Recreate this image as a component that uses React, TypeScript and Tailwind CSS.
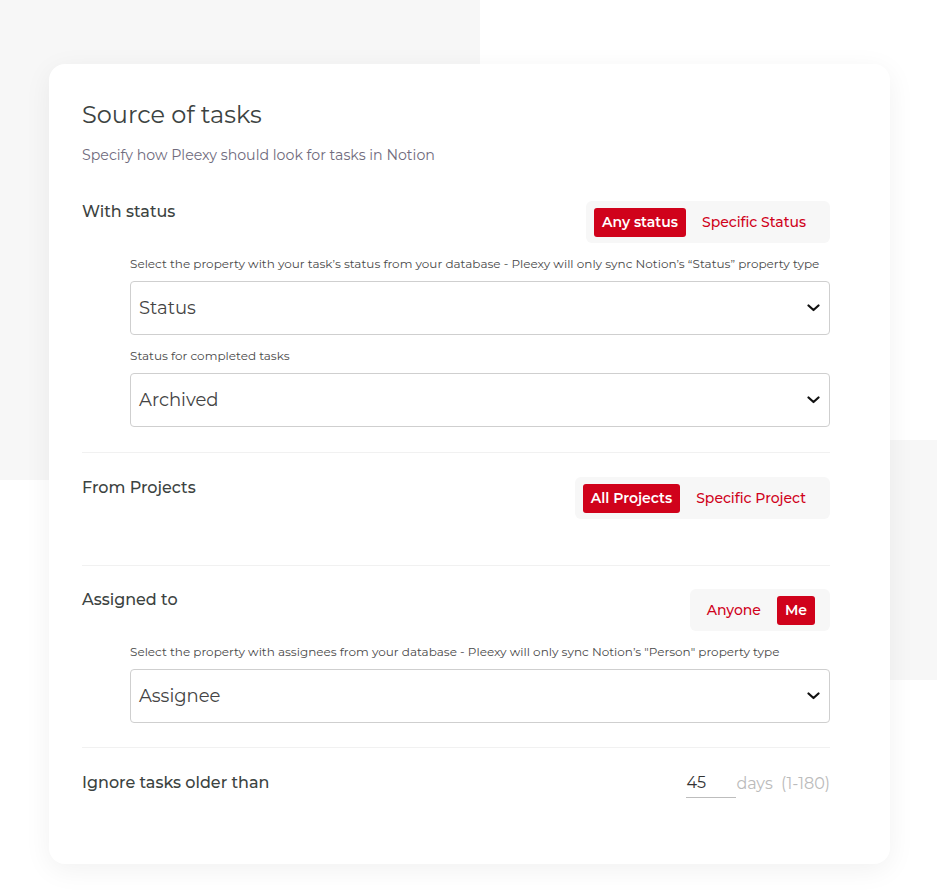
const FONT = "font-['Montserrat','Open_Sans','Noto_Sans',sans-serif]";

type Option = { label: string; cls: string };

const Toggle = ({
  options,
  active,
  className,
}: {
  options: Option[];
  active: number;
  className: string;
}) => (
  <div className={`flex h-[42px] items-center rounded-md bg-[#f7f7f7] ${className}`}>
    {options.map((o, i) => (
      <button
        key={o.label}
        className={`h-[29px] rounded-[3px] text-[14px] leading-none ${o.cls} ${
          i === active ? "bg-[#d0021b] font-semibold text-white" : "font-medium text-[#d0021b]"
        }`}
      >
        {o.label}
      </button>
    ))}
  </div>
);

const Chevron = () => (
  <svg width="13" height="8" viewBox="0 0 13 8" fill="none">
    <path d="M1.5 1.5L6.5 6L11.5 1.5" stroke="#111" strokeWidth="2.2" strokeLinecap="round" strokeLinejoin="round" />
  </svg>
);

const Select = ({ value }: { value: string }) => (
  <div className="flex h-[54px] items-center justify-between rounded-[4px] border border-[#cfcfcf] pl-2 pr-[9px]">
    <span className="text-[18px] text-[#444]">{value}</span>
    <Chevron />
  </div>
);

const Hint = ({ children }: { children: string }) => (
  <p className="whitespace-nowrap text-[12px] leading-[18px] text-[#4a4a4a]">{children}</p>
);

export default function App() {
  return (
    <div className={`relative h-[894px] w-[937px] overflow-hidden bg-white ${FONT}`}>
      {/* background blocks */}
      <div className="absolute left-0 top-0 h-[480px] w-[480px] bg-[#f7f7f7]" />
      <div className="absolute left-[890px] top-[440px] h-[240px] w-[47px] bg-[#f7f7f7]" />

      {/* CARD */}
      <div className="relative ml-[49px] mt-[64px] h-[800px] w-[841px] rounded-2xl bg-white pl-[33px] pr-[60px] pt-[36px] shadow-[0_6px_28px_rgba(0,0,0,0.06)]">
        {/* HEADER */}
        <h1 className="text-[24px] leading-[30px] text-[#3c4341]">Source of tasks</h1>
        <p className="mt-[15px] text-[14.2px] leading-[20px] text-[#6f6b7d]">
          Specify how Pleexy should look for tasks in Notion
        </p>

        {/* WITH STATUS */}
        <div className="mt-[36px] pb-[25px]">
          <div className="flex items-start justify-between">
            <h3 className="pt-[1px] text-[16px] leading-[20px] font-medium text-[#3c4341]">With status</h3>
            <Toggle
              className="pl-2 pr-2"
              active={0}
              options={[
                { label: "Any status", cls: "px-2" },
                { label: "Specific Status", cls: "px-4" },
              ]}
            />
          </div>
          <div className="ml-[48px] mt-3">
            <Hint>
              Select the property with your task’s status from your database - Pleexy will only sync Notion’s “Status” property type
            </Hint>
            <div className="mt-2">
              <Select value="Status" />
            </div>
            <div className="mt-3">
              <Hint>Status for completed tasks</Hint>
            </div>
            <div className="mt-2">
              <Select value="Archived" />
            </div>
          </div>
        </div>

        {/* FROM PROJECTS */}
        <div className="border-t border-[#f1f1f1] pt-6 pb-[46px]">
          <div className="flex items-start justify-between">
            <h3 className="pt-[1px] text-[16px] leading-[20px] font-medium text-[#3c4341]">From Projects</h3>
            <Toggle
              className="pl-2 pr-2"
              active={0}
              options={[
                { label: "All Projects", cls: "px-2" },
                { label: "Specific Project", cls: "px-4" },
              ]}
            />
          </div>
        </div>

        {/* ASSIGNED TO */}
        <div className="border-t border-[#f1f1f1] pt-[23px] pb-6">
          <div className="flex items-start justify-between">
            <h3 className="pt-[1px] text-[16px] leading-[20px] font-medium text-[#3c4341]">Assigned to</h3>
            <Toggle
              className="pl-2 pr-[15px]"
              active={1}
              options={[
                { label: "Anyone", cls: "pl-[9px] pr-4" },
                { label: "Me", cls: "px-2" },
              ]}
            />
          </div>
          <div className="ml-[48px] mt-3">
            <Hint>
              Select the property with assignees from your database - Pleexy will only sync Notion’s "Person" property type
            </Hint>
            <div className="mt-2">
              <Select value="Assignee" />
            </div>
          </div>
        </div>

        {/* IGNORE OLDER */}
        <div className="flex items-start justify-between border-t border-[#f1f1f1] pt-6">
          <h3 className="pt-[1px] text-[16px] leading-[20px] font-medium text-[#3c4341]">Ignore tasks older than</h3>
          <div className="flex items-end">
            <div className="w-[50px] border-b border-[#bdbdbd] pb-[3px] text-[16px] leading-[22px] text-[#333]">45</div>
            <span className="pb-[3px] text-[16px] leading-[22px] text-[#bbbbbb]">days&nbsp; (1-180)</span>
          </div>
        </div>
      </div>
    </div>
  );
}
